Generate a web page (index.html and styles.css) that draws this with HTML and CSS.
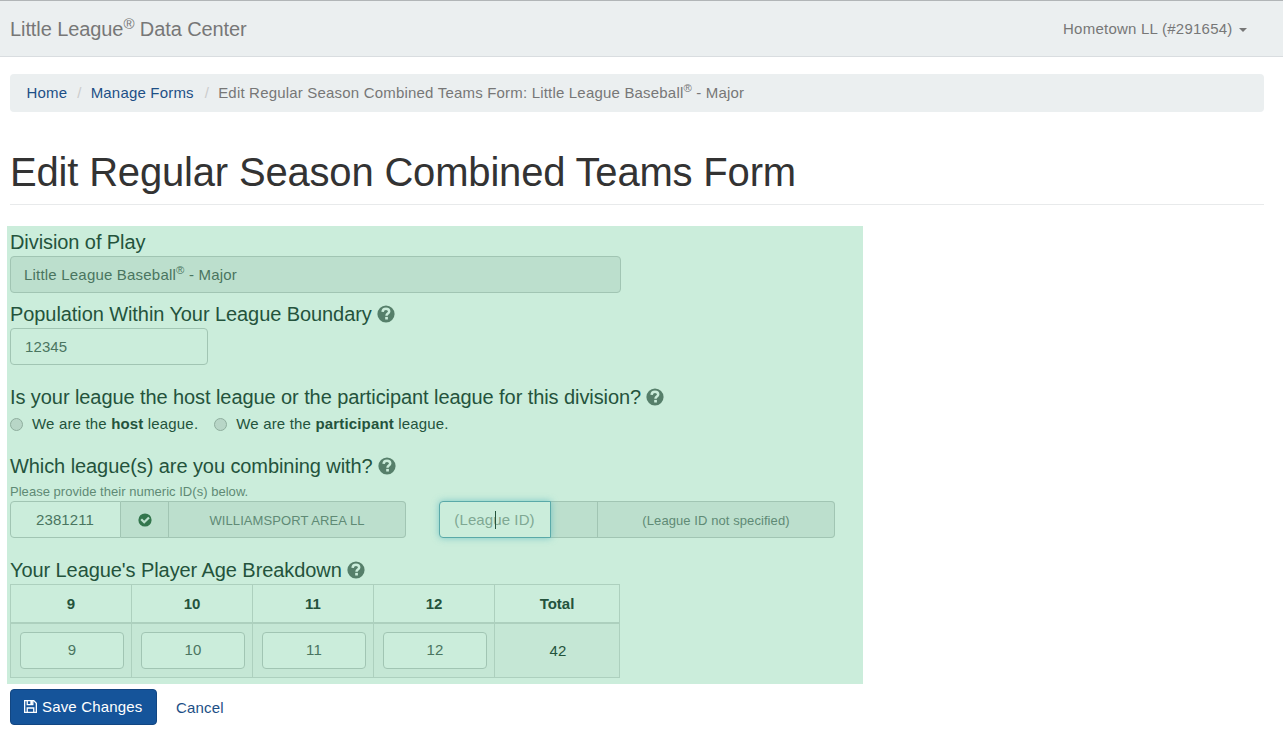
FILE: index.html
```html
<!DOCTYPE html>
<html lang="en">
<head>
    <meta charset="utf-8">
    <title>Little League Data Center</title>
    <link rel="stylesheet" href="styles.css">
</head>
<body>

<!-- shared icons -->
<svg class="sprite" width="0" height="0">
    <symbol id="icon-question" viewBox="0 0 18 18">
        <circle cx="9" cy="9" r="8.6" fill="currentColor"/>
        <path d="M5.6 6.9C5.7 4.7 7 3.7 9 3.7c2 0 3.2 1.2 3.2 2.8 0 2.1-2.7 2.1-2.7 4.2" fill="none" stroke="#cbeddb" stroke-width="2.5"/>
        <rect x="8.2" y="11.9" width="2.7" height="2.6" fill="#cbeddb"/>
    </symbol>
    <symbol id="icon-check" viewBox="0 0 14 14">
        <circle cx="7" cy="7" r="6.6" fill="currentColor"/>
        <path d="M3.2 6.2l3 3 4.8-4.7" fill="none" stroke="#bcdfcd" stroke-width="2.3"/>
    </symbol>
    <symbol id="icon-save" viewBox="0 0 14 14">
        <path d="M.7.7h9.8l2.8 2.8v9.8H.7zM3.5 13V8.6h7V13M3.5 1v3.9h6V1" fill="none" stroke="currentColor" stroke-width="1.4"/>
        <rect x="6.8" y="1" width="2.2" height="3.4" fill="currentColor"/>
    </symbol>
</svg>

<nav class="navbar">
    <a class="navbar-brand">Little League<sup>®</sup> Data Center</a>
    <a class="navbar-user">Hometown LL (#291654) <b class="caret"></b></a>
</nav>

<div class="container">
    <ol class="breadcrumb">
        <li><a>Home</a></li>
        <li><a>Manage Forms</a></li>
        <li class="active">Edit Regular Season Combined Teams Form: Little League Baseball<sup>®</sup> - Major</li>
    </ol>

    <h1 class="page-header"><span>Edit Regular Season Combined Teams Form</span></h1>

    <form>
        <div class="panel">
            <h4>Division of Play</h4>
            <div class="form-control disabled division">Little League Baseball<sup>®</sup> - Major</div>

            <h4 class="h-population">Population Within Your League Boundary <svg class="help"><use href="#icon-question"/></svg></h4>
            <input class="form-control population" type="text" value="12345">

            <h4 class="h-host">Is your league the host league or the participant league for this division? <svg class="help"><use href="#icon-question"/></svg></h4>
            <div class="radios">
                <label><i class="radio"></i>We are the <b>host</b> league.</label>
                <label><i class="radio"></i>We are the <b>participant</b> league.</label>
            </div>

            <h4 class="h-combine">Which league(s) are you combining with? <svg class="help"><use href="#icon-question"/></svg></h4>
            <p class="help-block">Please provide their numeric ID(s) below.</p>
            <div class="leagues">
                <div class="input-group">
                    <input class="form-control league-id" type="text" value="2381211">
                    <span class="addon addon-icon"><svg class="check"><use href="#icon-check"/></svg></span>
                    <span class="addon addon-name">WILLIAMSPORT AREA LL</span>
                </div>
                <div class="input-group">
                    <div class="form-control league-id focused"><span class="placeholder">(League ID)</span><i class="cursor"></i></div>
                    <span class="addon addon-icon"></span>
                    <span class="addon addon-name">(League ID not specified)</span>
                </div>
            </div>

            <h4 class="h-ages">Your League's Player Age Breakdown <svg class="help"><use href="#icon-question"/></svg></h4>
            <table class="ages">
                <thead>
                <tr>
                    <th>9</th>
                    <th>10</th>
                    <th>11</th>
                    <th>12</th>
                    <th class="total">Total</th>
                </tr>
                </thead>
                <tbody>
                <tr>
                    <td><input class="form-control" type="text" value="9"></td>
                    <td><input class="form-control" type="text" value="10"></td>
                    <td><input class="form-control" type="text" value="11"></td>
                    <td><input class="form-control" type="text" value="12"></td>
                    <td>42</td>
                </tr>
                </tbody>
            </table>
        </div>

        <div class="actions">
            <button class="btn" type="button"><svg class="save"><use href="#icon-save"/></svg><span>Save Changes</span></button>
            <a class="cancel">Cancel</a>
        </div>
    </form>
</div>

</body>
</html>
```

FILE: styles.css
```css
* {
    box-sizing: border-box;
}

body {
    margin: 0;
    color: #24533c;
    background: #fff;
    font: 15px/21px "Liberation Sans", Arial, sans-serif;
    letter-spacing: 0.17px;
    overflow: hidden;
}

a {
    color: #1d4f86;
    text-decoration: none;
}

sup {
    position: relative;
    top: -0.5em;
    font-size: 75%;
    line-height: 0;
    vertical-align: baseline;
}

.sprite {
    position: absolute;
}

/* navbar */
.navbar {
    display: flex;
    justify-content: space-between;
    align-items: center;
    height: 57px;
    padding: 0 36px 0 10px;
    background: #ebeff0;
    border-top: 1px solid #b1b5b7;
    border-bottom: 1px solid #d9dde0;
}

.navbar a {
    color: #777;
}

.navbar-brand {
    padding-top: 2px;
    font-size: 20px;
    letter-spacing: -0.09px;
}

.navbar-user {
    letter-spacing: 0.24px;
}

.caret {
    display: inline-block;
    margin-left: 2px;
    vertical-align: middle;
    border-top: 4px solid #777;
    border-left: 4px solid transparent;
    border-right: 4px solid transparent;
}

.container {
    margin: 17px 19px 0 10px;
}

.breadcrumb {
    display: flex;
    align-items: center;
    height: 38px;
    margin: 0;
    padding: 0 16px 2px;
    list-style: none;
    background: #ebeff0;
    border-radius: 4px;
    letter-spacing: 0.19px;
}

.breadcrumb li + li:before {
    content: "/";
    padding: 0 9px 0 10px;
    color: #ccc;
}

.breadcrumb li:first-child {
    padding-left: 0.5px;
}

.breadcrumb .active {
    padding-left: 1px;
    color: #777;
}

.page-header {
    height: 93px;
    margin: 0 0 21px;
    padding-top: 36px;
    color: #333;
    font-size: 40px;
    font-weight: normal;
    line-height: 48px;
    letter-spacing: -0.18px;
    border-bottom: 1px solid #e8eaeb;
}

/* form */
.panel {
    width: 856px;
    height: 458px;
    margin-left: -3px;
    padding: 2px 0 0 3px;
    background: #cbeddb;
}

h4 {
    display: flex;
    align-items: center;
    height: 28px;
    margin: 0;
    font-size: 20px;
    font-weight: normal;
    letter-spacing: -0.08px;
}

.h-population {
    margin-top: 7px;
}

.h-host,
.h-ages {
    margin-top: 18px;
}

.h-combine {
    margin-top: 15px;
}

.help {
    width: 18px;
    height: 18px;
    margin-left: 5px;
    color: #567f6a;
}

.form-control {
    display: block;
    width: 100%;
    height: 37px;
    margin: 0;
    padding: 0 14px;
    color: #4a7560;
    background: #cbeddb;
    border: 1px solid #a1c5b3;
    border-radius: 4px;
    font: 15px/35px "Liberation Sans", Arial, sans-serif;
    letter-spacing: 0.1px;
    outline: none;
}

.disabled {
    background: #bcdfcd;
}

.division {
    width: 611px;
    padding-left: 13px;
    letter-spacing: 0.2px;
}

.population {
    width: 198px;
}

.radios {
    display: flex;
    gap: 16px;
    height: 26px;
}

.radios label {
    display: flex;
    align-items: center;
    padding-bottom: 1px;
    white-space: pre;
}

.radio {
    position: relative;
    top: 1px;
    width: 13px;
    height: 13px;
    margin-right: 9px;
    background: #b8d6c7;
    border: 1px solid #8fae9e;
    border-radius: 50%;
}

.help-block {
    height: 21px;
    margin: 0;
    padding-top: 1px;
    color: #5f8a75;
    font-size: 13px;
    line-height: 22px;
    letter-spacing: 0.03px;
}

.leagues {
    display: flex;
    gap: 33px;
}

.input-group {
    display: flex;
    width: 396px;
}

.league-id {
    position: relative;
    width: 111px;
    padding: 0 14px 0 13px;
    text-align: center;
    border-radius: 4px 0 0 4px;
}

.focused {
    width: 112px;
    margin-right: -1px;
    border-color: #5aa9a8;
    box-shadow: 0 0 7px rgba(70, 175, 185, 0.6);
}

.placeholder {
    color: #7fa893;
}

.cursor {
    position: absolute;
    top: 9px;
    left: 55px;
    width: 1px;
    height: 18px;
    background: #24533c;
}

.addon {
    display: flex;
    align-items: center;
    justify-content: center;
    height: 37px;
    color: #5f8a75;
    background: #bcdfcd;
    border: 1px solid #a1c5b3;
    border-left: 0;
    font-size: 13px;
    letter-spacing: 0.08px;
}

.addon-icon {
    width: 48px;
}

.addon-name {
    flex: 1;
    padding-top: 2px;
    border-radius: 0 4px 4px 0;
}

.check {
    width: 14px;
    height: 14px;
    color: #33764d;
}

.ages {
    width: 610px;
    table-layout: fixed;
    border-collapse: collapse;
    text-align: center;
}

.ages th,
.ages td {
    width: 121px;
    padding: 0 7px 0 9px;
    border: 1px solid #add0be;
}

.ages th {
    height: 38px;
    padding: 0 8px;
    border-bottom-width: 2px;
    letter-spacing: 0;
}

.ages td {
    height: 55px;
    background: #c5e7d5;
}

.ages .total {
    width: auto;
}

.ages .form-control {
    padding-bottom: 2px;
    text-align: center;
}

.actions {
    display: flex;
    align-items: center;
    margin-top: 5px;
}

.btn {
    display: flex;
    align-items: center;
    width: 147px;
    height: 36px;
    padding: 0 0 1px 13px;
    color: #fff;
    background: #15549a;
    border: 1px solid #124682;
    border-radius: 4px;
    font: 15px/21px "Liberation Sans", Arial, sans-serif;
    letter-spacing: 0.17px;
}

.save {
    width: 13px;
    height: 13px;
    margin-right: 5px;
}

.cancel {
    margin-left: 19px;
}
```
